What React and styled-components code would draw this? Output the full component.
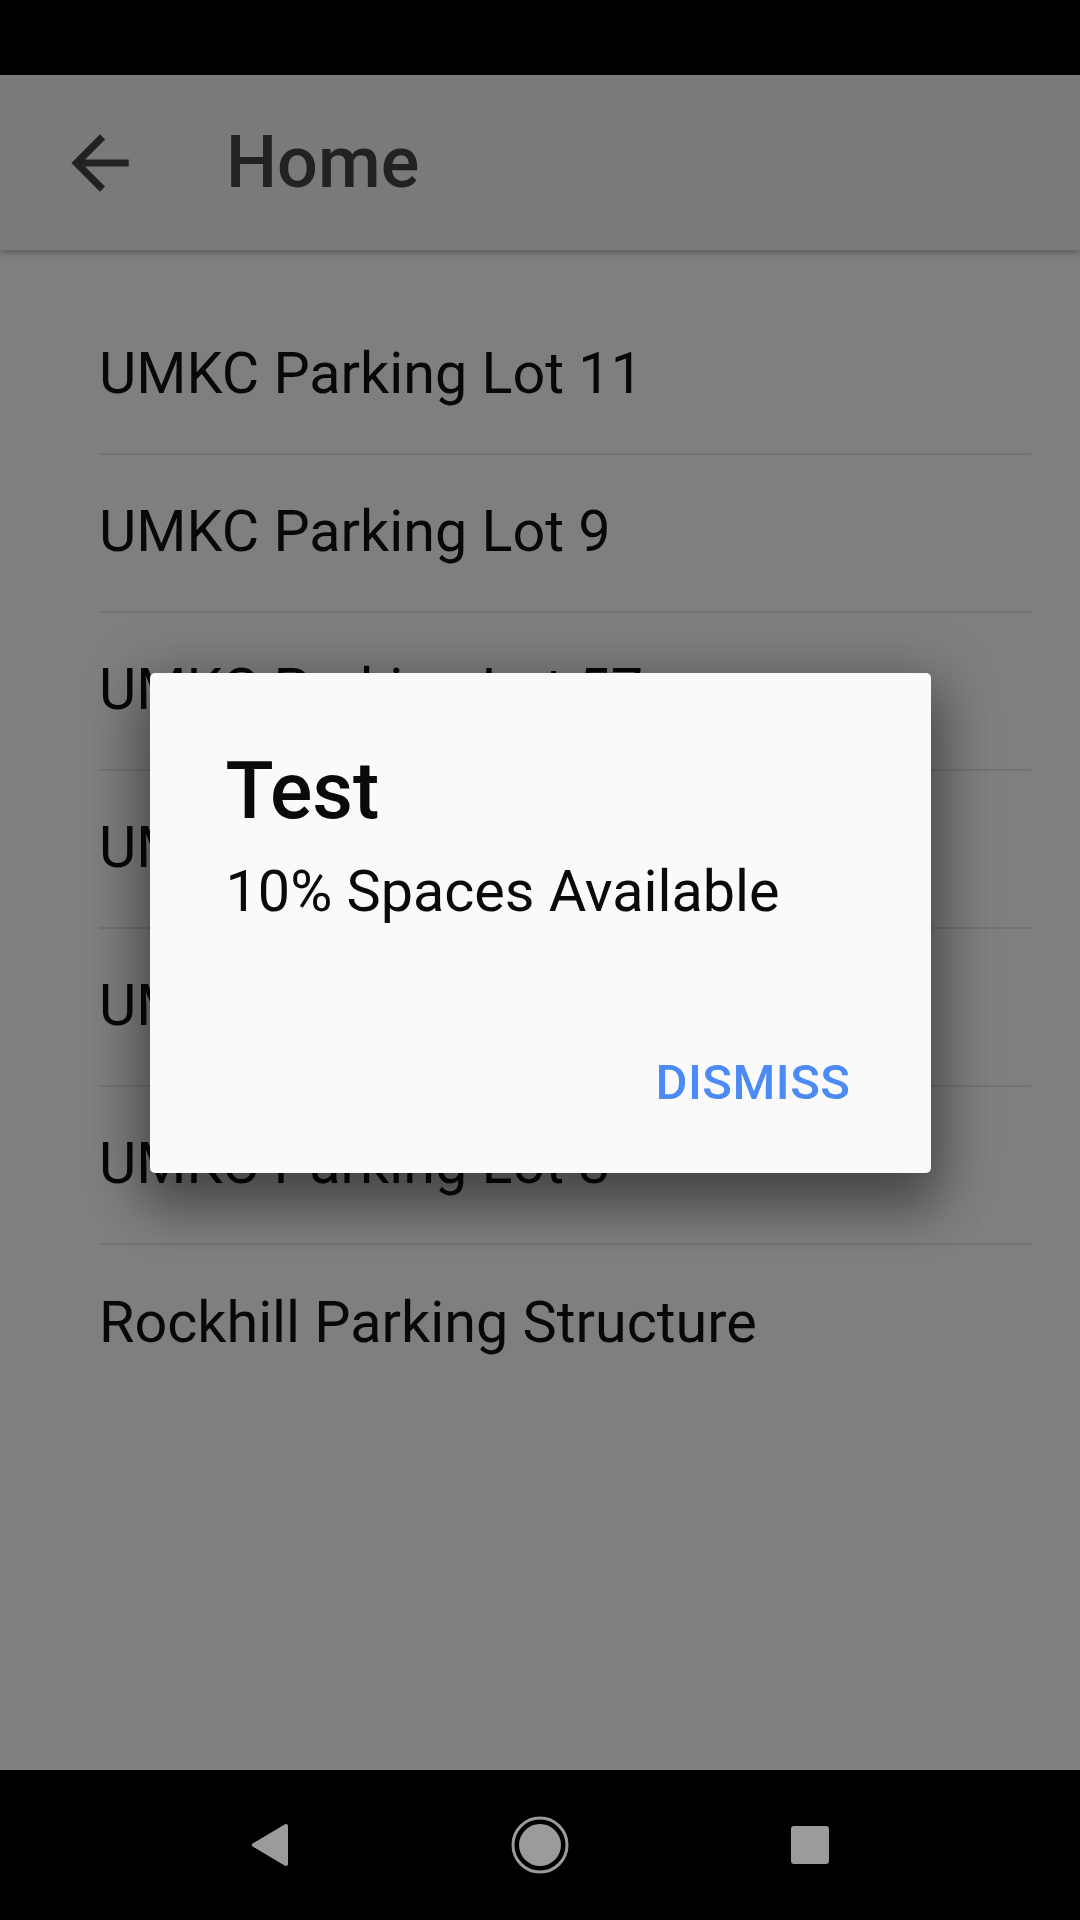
import styled, { createGlobalStyle } from 'styled-components';

const GlobalStyle = createGlobalStyle`
  html, body {
    margin: 0;
    padding: 0;
    background: #000;
  }
  body {
    font-family: Roboto, "Liberation Sans", sans-serif;
  }
`;

const Screen = styled.div`
  width: 1080px;
  height: 1920px;
  display: flex;
  flex-direction: column;
  overflow: hidden;
`;

const StatusBar = styled.div`
  height: 75px;
  flex-shrink: 0;
  background: #000;
`;

const AppArea = styled.div`
  position: relative;
  flex: 1;
  display: flex;
  flex-direction: column;
  background: #fff;
`;

const AppBar = styled.header`
  height: 175px;
  flex-shrink: 0;
  display: flex;
  align-items: center;
  padding-left: 57px;
  gap: 83px;
  background: #f5f5f5;
  box-shadow: 0 3px 6px rgba(0, 0, 0, 0.28);
  position: relative;
  z-index: 1;
`;

const BackButton = styled.svg`
  width: 86px;
  height: 86px;
  fill: #444;
  flex-shrink: 0;
`;

const Title = styled.h1`
  margin: 0;
  font-size: 72px;
  font-weight: 500;
  color: #444;
  line-height: 1;
`;

const List = styled.ul`
  list-style: none;
  margin: 0;
  padding: 47px 49px 0 99px;
`;

const Row = styled.li`
  display: flex;
  align-items: center;
  padding-bottom: 4px;
  box-sizing: border-box;
  height: 158px;
  font-size: 57.5px;
  color: #111;
  border-bottom: ${(p) => (p.last ? 'none' : '2px solid #e6e6e6')};
`;

const Overlay = styled.div`
  position: absolute;
  inset: 0;
  z-index: 2;
  background: rgba(0, 0, 0, 0.5);
  display: flex;
  align-items: center;
  justify-content: center;
`;

const Dialog = styled.div`
  width: 781px;
  height: 500px;
  box-sizing: border-box;
  padding: 74px 80px 62px 76px;
  background: #fafafa;
  border-radius: 5px;
  box-shadow: 0 30px 50px 6px rgba(0, 0, 0, 0.32), 0 10px 60px 12px rgba(0, 0, 0, 0.2);
  display: flex;
  flex-direction: column;
`;

const DialogTitle = styled.h2`
  margin: 0;
  font-size: 79px;
  line-height: 88px;
  font-weight: 500;
  color: #0a0a0a;
`;

const DialogText = styled.p`
  margin: 25px 0 0;
  font-size: 57.5px;
  line-height: 64px;
  color: #0a0a0a;
`;

const Actions = styled.div`
  margin-top: auto;
  display: flex;
  justify-content: flex-end;
`;

const TextButton = styled.button`
  border: none;
  background: none;
  padding: 0;
  font-family: inherit;
  font-size: 49px;
  line-height: 56px;
  font-weight: 500;
  color: #4c8bf5;
  letter-spacing: 0.5px;
  cursor: pointer;
`;

const NavBar = styled.nav`
  height: 150px;
  flex-shrink: 0;
  background: #000;
  display: flex;
  justify-content: center;
  align-items: center;
`;

const NavSlot = styled.div`
  width: 270px;
  display: flex;
  justify-content: center;
  align-items: center;
`;

const lots = [
  'UMKC Parking Lot 11',
  'UMKC Parking Lot 9',
  'UMKC Parking Lot 57',
  'UMKC Parking Lot 44',
  'UMKC Parking Lot 5',
  'UMKC Parking Lot 3',
  'Rockhill Parking Structure',
];

export default function App() {
  return (
    <>
      <GlobalStyle />
      <Screen>
        <StatusBar />
        <AppArea>
          <AppBar>
            <BackButton viewBox="0 0 24 24">
              <path d="M20 11H7.83l5.59-5.59L12 4l-8 8 8 8 1.41-1.41L7.83 13H20v-2z" />
            </BackButton>
            <Title>Home</Title>
          </AppBar>
          <List>
            {lots.map((name, i) => (
              <Row key={name} last={i === lots.length - 1}>
                {name}
              </Row>
            ))}
          </List>
          <Overlay>
            <Dialog>
              <DialogTitle>Test</DialogTitle>
              <DialogText>10% Spaces Available</DialogText>
              <Actions>
                <TextButton>DISMISS</TextButton>
              </Actions>
            </Dialog>
          </Overlay>
        </AppArea>
        <NavBar>
          <NavSlot>
            <svg width="40" height="44" viewBox="0 0 40 44">
              <path
                d="M4 22 L36 3 L36 41 Z"
                fill="#9b9b9b"
                stroke="#9b9b9b"
                strokeWidth="4"
                strokeLinejoin="round"
              />
            </svg>
          </NavSlot>
          <NavSlot>
            <svg width="58" height="58" viewBox="0 0 58 58">
              <circle cx="29" cy="29" r="27" fill="none" stroke="#9b9b9b" strokeWidth="3" />
              <circle cx="29" cy="29" r="21" fill="#9b9b9b" />
            </svg>
          </NavSlot>
          <NavSlot>
            <svg width="38" height="38" viewBox="0 0 38 38">
              <rect x="0" y="0" width="38" height="38" rx="3" fill="#9b9b9b" />
            </svg>
          </NavSlot>
        </NavBar>
      </Screen>
    </>
  );
}
